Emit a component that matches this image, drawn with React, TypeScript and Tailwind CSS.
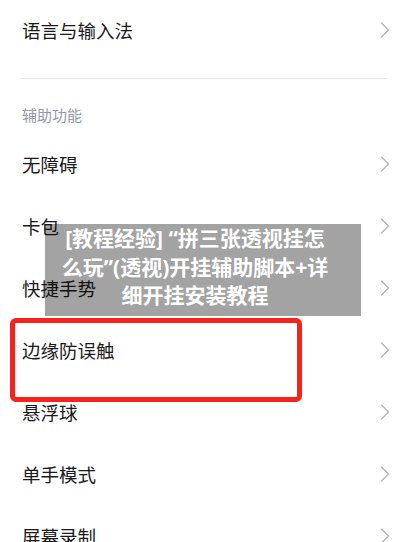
import React from "react";

const rows = ["无障碍", "卡包", "快捷手势", "边缘防误触", "悬浮球", "单手模式", "屏幕录制"];

function Chevron() {
  return (
    <svg width="10" height="16" viewBox="0 0 10 16" fill="none" aria-hidden>
      <path d="M1.5 1 L8.5 8 L1.5 15" stroke="#b4b4b4" strokeWidth="1.4" strokeLinecap="round" strokeLinejoin="round" />
    </svg>
  );
}

function Row({ label }: { label: string }) {
  return (
    <div className="flex h-[62px] items-center justify-between pl-[22px] pr-[17px]">
      <span className="text-[18.5px] leading-[24px] text-[#1a1a1a]">{label}</span>
      <Chevron />
    </div>
  );
}

export default function App() {
  return (
    <div
      className="relative h-[542px] w-[407px] overflow-hidden bg-white"
      style={{ fontFamily: "'Noto Sans CJK SC', 'Noto Sans', sans-serif" }}
    >
      {/* Settings list */}
      <div className="flex h-[60px] items-center justify-between pl-[22px] pr-[17px]">
        <span className="text-[18.5px] leading-[24px] text-[#1a1a1a]">语言与输入法</span>
        <Chevron />
      </div>
      <div className="mx-[21px] mt-[18px] h-px bg-[#e8e8e8]" />
      <div className="h-[54px] pl-[22px] pt-[23px]">
        <span className="text-[15px] leading-[20px] text-[#9198a8]">辅助功能</span>
      </div>
      {rows.map((r) => (
        <Row key={r} label={r} />
      ))}

      {/* Overlay caption */}
      <div
        className="absolute left-[45px] top-[224px] flex h-[92px] w-[316px] flex-col items-center bg-[rgba(0,0,0,0.36)] pr-[16px] text-[21px] font-bold leading-[28.5px] text-white"
        style={{ fontFamily: "'Noto Sans', 'Noto Sans CJK SC', sans-serif" }}
      >
        <span className="whitespace-nowrap">[教程经验] “拼三张透视挂怎</span>
        <span className="whitespace-nowrap">么玩”(透视)开挂辅助脚本+详</span>
        <span className="whitespace-nowrap">细开挂安装教程</span>
      </div>

      {/* Highlight box */}
      <div className="absolute left-[10px] top-[318px] h-[84px] w-[292px] rounded-[6px] border-[5px] border-[#f5231b]" />
    </div>
  );
}
